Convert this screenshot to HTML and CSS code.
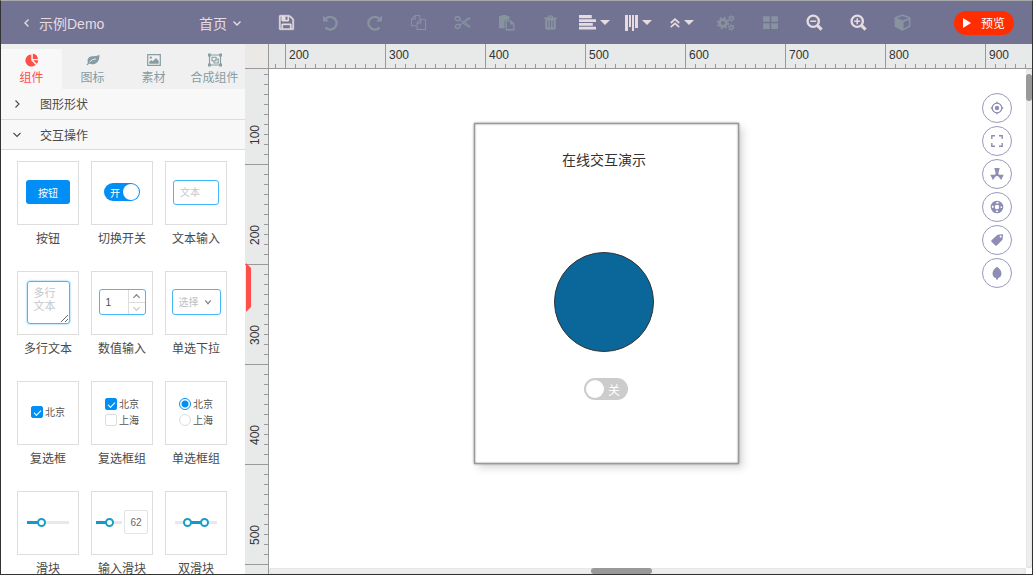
FILE: index.html
```html
<!DOCTYPE html>
<html lang="zh-CN">
<head>
<meta charset="utf-8">
<title>示例Demo</title>
<meta name="viewport" content="width=device-width, initial-scale=1">
<link rel="stylesheet" href="styles.css">
</head>
<body>
<div class="app">
  <header class="topbar">
    <div class="topbar-left">
      <button class="back" type="button"><svg class="chev" viewBox="0 0 10 10"><path d="M6.500 1.500L3 5l3.500 3.500"/></svg>示例Demo</button>
      <button class="page-menu" type="button">首页<svg class="chev" viewBox="0 0 10 10"><path d="M1.500 3.500L5 7l3.500-3.500"/></svg></button>
    </div>
    <nav class="tools" aria-label="工具栏">
      <button class="tool" type="button" aria-label="保存"><svg class="ico" viewBox="0 0 1792 1792"><path stroke="currentColor" stroke-width="50" d="M512 1536h768v-384h-768v384zm896 0h128v-896q0-14-10-38.500t-20-34.500l-281-281q-10-10-34-20t-39-10v416q0 40-28 68t-68 28h-576q-40 0-68-28t-28-68v-416h-128v1280h128v-416q0-40 28-68t68-28h832q40 0 68 28t28 68v416zm-384-928v-320q0-13-9.500-22.500t-22.500-9.500h-192q-13 0-22.500 9.500t-9.500 22.500v320q0 13 9.500 22.500t22.500 9.500h192q13 0 22.500-9.500t9.500-22.500zm640 32v928q0 40-28 68t-68 28h-1344q-40 0-68-28t-28-68v-1344q0-40 28-68t68-28h928q40 0 88 20t76 48l280 280q28 28 48 76t20 88z"/></svg></button>
      <button class="tool off" type="button" aria-label="撤销"><svg class="ico" viewBox="0 0 16 16"><path d="M3.200 12.600A6 6 0 1 0 3.600 4.300" fill="none" stroke="currentColor" stroke-width="2.200"/><path d="M1 1.500v5.500h5.500z"/></svg></button>
      <button class="tool off" type="button" aria-label="重做"><svg class="ico" viewBox="0 0 16 16"><path d="M12.800 12.600A6 6 0 1 1 12.400 4.300" fill="none" stroke="currentColor" stroke-width="2.200"/><path d="M15 1.500v5.500H9.500z"/></svg></button>
      <button class="tool off" type="button" aria-label="复制"><svg class="ico line" viewBox="0 0 18 18"><path d="M6.500 12.500h-5v-7l4-4h5v4M5.500 1.500v4h-4M7.500 9.500l4-4h5v11h-9zM11.500 5.500v4h-4"/></svg></button>
      <button class="tool off" type="button" aria-label="剪切"><svg class="ico line" viewBox="0 0 18 18"><g stroke-width="1.500"><ellipse cx="4" cy="5" rx="2.700" ry="2" transform="rotate(25 4 5)"/><ellipse cx="4" cy="13" rx="2.700" ry="2" transform="rotate(-25 4 13)"/></g><path d="M6.300 6.500L9 8.300 16 4l1 1-9.600 6-1 .6M9 9.500l7 4.500 1-1-5.500-4"/></svg></button>
      <button class="tool off" type="button" aria-label="粘贴"><svg class="ico" viewBox="0 0 18 18"><path d="M1 2h3V1h5v1h3v4H8.500L7 7.500V15H1z"/><path d="M8.700 7.200h4.600l3.500 3.500v6h-8.100z" fill="none" stroke="currentColor" stroke-width="1.400"/><path d="M13 7v4h4z"/></svg></button>
      <button class="tool off" type="button" aria-label="删除"><svg class="ico" viewBox="0 0 16 16"><path fill-rule="evenodd" d="M2 3.200h3.300L6 1.500h4l.7 1.700H14v1.300h-1V13q0 1.800-1.500 1.800h-7Q3 14.800 3 13V4.500H2zM6.700 3.200h2.600L9 2.500H7zM5 6v6.500h1V6zm2.500 0v6.500h1V6zM10 6v6.500h1V6z"/></svg></button>
      <button class="tool" type="button" aria-label="水平对齐"><svg class="ico" viewBox="0 0 16 16"><path d="M0 1h12v3H0zM0 5h16v2.500H0zM0 8.500h13v2.500H0zM0 12h16v2.500H0z"/></svg><i class="caret"></i></button>
      <button class="tool" type="button" aria-label="垂直对齐"><svg class="ico narrow" viewBox="0 0 13 16"><path d="M0 0h3v16H0zM4 0h2v12H4zM7 0h2v16H7zM10 0h3v13h-3z"/></svg><i class="caret"></i></button>
      <button class="tool" type="button" aria-label="层级"><svg class="ico tiny" viewBox="0 0 10 10"><path d="M.8 5L5 1.200 9.200 5M.8 9.200L5 5.400l4.200 3.800" fill="none" stroke="currentColor" stroke-width="1.700"/></svg><i class="caret"></i></button>
      <button class="tool off" type="button" aria-label="设置"><svg class="ico wide" viewBox="0 0 18 16"><g fill="none" stroke="currentColor"><circle cx="6" cy="8" r="3.400" stroke-width="2.600"/><circle cx="6" cy="8" r="5.300" stroke-width="1.800" stroke-dasharray="2.080"/><circle cx="14.300" cy="3.500" r="1.700" stroke-width="1.400"/><circle cx="14.300" cy="3.500" r="2.800" stroke-width="1.100" stroke-dasharray="1.470"/><circle cx="14.300" cy="12.500" r="1.700" stroke-width="1.400"/><circle cx="14.300" cy="12.500" r="2.800" stroke-width="1.100" stroke-dasharray="1.470"/></g></svg></button>
      <button class="tool off" type="button" aria-label="组合"><svg class="ico" viewBox="0 0 16 16"><path d="M1 2h6.300v5.300H1zM8.700 2H15v5.300H8.700zM1 8.700h6.300V14H1zM8.700 8.700H15V14H8.700z"/></svg></button>
      <button class="tool" type="button" aria-label="缩小"><svg class="ico" viewBox="0 0 16 16"><g fill="none" stroke="currentColor"><circle cx="6.800" cy="6.800" r="5.300" stroke-width="2.200"/><path d="M10.700 10.700l4 4" stroke-width="2.900"/><path d="M4 6.800h5.600" stroke-width="1.400"/></g></svg></button>
      <button class="tool" type="button" aria-label="放大"><svg class="ico" viewBox="0 0 16 16"><g fill="none" stroke="currentColor"><circle cx="6.800" cy="6.800" r="5.300" stroke-width="2.200"/><path d="M10.700 10.700l4 4" stroke-width="2.900"/><path d="M4 6.800h5.600M6.800 4v5.600" stroke-width="1.400"/></g></svg></button>
      <button class="tool off" type="button" aria-label="三维"><svg class="ico" viewBox="0 0 16 16"><path fill-rule="evenodd" d="M8 .3l7.500 2.800v9L8 15.900.5 12.100v-9zM8 1.900L2.600 3.900 8 5.900l5.400-2zM9 7.600v6l5-2.500V5.700z"/></svg></button>
    </nav>
    <button class="preview" type="button"><svg viewBox="0 0 8 10"><path d="M0 0l8 5-8 5z"/></svg>预览</button>
  </header>

  <aside class="sidebar">
    <div class="tabs" role="tablist">
      <button class="tab active" role="tab" aria-selected="true" type="button"><svg viewBox="0 0 14 14"><path d="M6.300 1.500v6l4.300 4.300A6 6 0 1 1 6.300 1.500z"/><path d="M7.800.8A6 6 0 0 1 13 6L7.800 6zM8.200 7.300H13.300a6 6 0 0 1-1.700 3.500z"/></svg>组件</button>
      <button class="tab" role="tab" aria-selected="false" type="button"><svg viewBox="0 0 14 14"><path d="M13.300 1.500c.6 4-1 9-5.800 9.700-2 .3-3.300-.6-4.300-.5-.8.100-1.200 1.500-1.800 1.500-.7 0-1-.8-.5-1.300l1-1C.6 4.700 3.500 3.200 7.500 3.200c3 0 4.800-.4 5.800-1.700z"/><path d="M3.600 9.200C5.500 7 7.500 6 10 6" fill="none" stroke="#f0f0f0" stroke-width=".9"/></svg>图标</button>
      <button class="tab" role="tab" aria-selected="false" type="button"><svg viewBox="0 0 14 14"><path d="M.7 1.700h12.600v10.600H.7z" fill="none" stroke="currentColor" stroke-width="1.200"/><circle cx="3.800" cy="4.600" r="1.200"/><path d="M2.300 10.700V8.800L4.500 7l1.300 1.200L9 5l2.700 3v2.700z"/></svg>素材</button>
      <button class="tab" role="tab" aria-selected="false" type="button"><svg viewBox="0 0 14 14"><g fill="none" stroke="currentColor" stroke-width="1.100"><path d="M1.500 2h11v10h-11zM4 4.300h4v3.500H4zM8 6h2.300v4H6V7.800"/></g><path d="M0 .6h2.800v2.800H0zM11.200.6H14v2.800h-2.800zM0 10.600h2.800v2.800H0zM11.200 10.600H14v2.800h-2.800z"/></svg>合成组件</button>
    </div>
    <button class="section" type="button" aria-expanded="false"><svg class="chev" viewBox="0 0 10 10"><path d="M3.500 1.500L7 5 3.500 8.500"/></svg>图形形状</button>
    <button class="section" type="button" aria-expanded="true"><svg class="chev" viewBox="0 0 10 10"><path d="M1.500 4L5 7.500 8.500 4"/></svg>交互操作</button>

    <div class="widgets">
      <figure class="widget"><div class="box"><button class="mini-btn" type="button">按钮</button></div><figcaption>按钮</figcaption></figure>
      <figure class="widget"><div class="box"><button class="switch on" type="button" role="switch" aria-checked="true">开<i class="knob"></i></button></div><figcaption>切换开关</figcaption></figure>
      <figure class="widget"><div class="box"><input class="mini-text" type="text" placeholder="文本" aria-label="文本输入"></div><figcaption>文本输入</figcaption></figure>

      <figure class="widget"><div class="box"><textarea class="mini-area" placeholder="多行
文本" aria-label="多行文本"></textarea></div><figcaption>多行文本</figcaption></figure>
      <figure class="widget"><div class="box"><div class="mini-num"><input type="text" value="1" aria-label="数值输入"><div class="steps"><button type="button" aria-label="增加"><svg class="chev" viewBox="0 0 10 10"><path d="M1.500 6.500L5 3l3.500 3.500"/></svg></button><button class="down" type="button" aria-label="减少"><svg class="chev" viewBox="0 0 10 10"><path d="M1.500 3.500L5 7l3.500-3.500"/></svg></button></div></div></div><figcaption>数值输入</figcaption></figure>
      <figure class="widget"><div class="box"><div class="mini-select"><select aria-label="单选下拉"><option>选择</option></select><svg class="chev" viewBox="0 0 10 10"><path d="M1.500 3L5 7l3.500-4"/></svg></div></div><figcaption>单选下拉</figcaption></figure>

      <figure class="widget"><div class="box"><div class="choices"><label><input type="checkbox" checked>北京</label></div></div><figcaption>复选框</figcaption></figure>
      <figure class="widget"><div class="box"><div class="choices"><label><input type="checkbox" checked>北京</label><label><input type="checkbox">上海</label></div></div><figcaption>复选框组</figcaption></figure>
      <figure class="widget"><div class="box"><div class="choices"><label><input type="radio" name="city" checked>北京</label><label><input type="radio" name="city">上海</label></div></div><figcaption>单选框组</figcaption></figure>

      <figure class="widget"><div class="box"><input class="range single" type="range" value="29" aria-label="滑块"></div><figcaption>滑块</figcaption></figure>
      <figure class="widget"><div class="box"><input class="range short" type="range" value="50" aria-label="输入滑块"><input class="range-value" type="text" value="62" aria-label="滑块数值"></div><figcaption>输入滑块</figcaption></figure>
      <figure class="widget"><div class="box"><input class="range low" type="range" value="70" aria-label="最小值"><input class="range high" type="range" value="30" aria-label="最大值"></div><figcaption>双滑块</figcaption></figure>
    </div>
  </aside>

  <main class="workspace">
    <div class="corner"></div>
    <div class="ruler-x"><span>200</span><span>300</span><span>400</span><span>500</span><span>600</span><span>700</span><span>800</span><span>900</span></div>
    <div class="ruler-y"><span>100</span><span>200</span><span>300</span><span>400</span><span>500</span></div>
    <div class="canvas">
      <div class="sheet">
        <div class="sheet-title">在线交互演示</div>
        <div class="circle"></div>
        <button class="switch sheet-switch" type="button" role="switch" aria-checked="false"><i class="knob"></i>关</button>
      </div>
      <div class="side-tools">
        <button type="button" aria-label="定位"><svg viewBox="0 0 14 14"><g fill="none" stroke="currentColor" stroke-width="1.300"><circle cx="7" cy="7" r="4.800"/><path d="M7 .8v2M7 11.200v2M.8 7h2M11.200 7h2"/></g><circle cx="7" cy="7" r="2.200"/></svg></button>
        <button type="button" aria-label="全屏"><svg viewBox="0 0 14 14"><path d="M1.800 5V1.800H5M9 1.800h3.200V5M12.200 9v3.200H9M5 12.200H1.800V9" fill="none" stroke="currentColor" stroke-width="1.400"/></svg></button>
        <button type="button" aria-label="节点"><svg viewBox="0 0 14 14"><path d="M4.300 1h5.400L8.500 5.500v1.700l1 .6h4.200l-2.500 5.200L8.500 9.600 7 8.900l-1.500.7L2.800 13 .3 7.800h4.200l1-.6V5.500z"/></svg></button>
        <button type="button" aria-label="帮助"><svg viewBox="0 0 14 14"><g fill="none" stroke="currentColor"><circle cx="7" cy="7" r="5.700" stroke-width="1.200"/><circle cx="7" cy="7" r="4.200" stroke-width="3" stroke-dasharray="4.400 2.200" stroke-dashoffset="-1"/><circle cx="7" cy="7" r="2.800" stroke-width="1.200"/></g></svg></button>
        <button type="button" aria-label="标签"><svg viewBox="0 0 14 14"><path fill-rule="evenodd" d="M7.500 1.800L12.300 1.200q.8 0 .8.800l-.6 4.800-5.700 5.600q-.8.600-1.500 0L1.500 8.700q-.7-.8 0-1.500zM10.700 2.600a1 1 0 1 0 .01 0z"/></svg></button>
        <button type="button" aria-label="主题"><svg viewBox="0 0 14 14"><path d="M7 .8c2 1.400 4.500 3.500 4.500 6.700 0 2.200-1.200 4-3.500 4.500v1.400H6V12C3.700 11.500 2.500 9.700 2.500 7.500 2.500 4.300 5 2.200 7 .8z"/></svg></button>
      </div>
      <div class="scroll-y"><i></i></div>
      <div class="scroll-x"><i></i></div>
    </div>
    <button class="collapse" type="button" aria-label="收起"></button>
  </main>
</div>
</body>
</html>
```
FILE: styles.css
```css
* { box-sizing: border-box; }

body {
  margin: 0;
  font-family: "Liberation Sans", "Noto Sans CJK SC", sans-serif;
  font-size: 12px;
  color: #4a4a4a;
}

button, input, textarea, select {
  font: inherit;
  color: inherit;
  margin: 0;
  padding: 0;
  border: 0;
  background: none;
}

button { cursor: pointer; }

svg { display: block; flex: none; fill: currentColor; }

.chev {
  width: 10px;
  height: 10px;
  fill: none;
  stroke: currentColor;
  stroke-width: 1.4;
}

.app {
  height: 100vh;
  display: grid;
  grid-template: 43px minmax(0, 1fr) / 244px minmax(0, 1fr);
  border: 1px solid #333;
  border-top-color: #aaa;
  overflow: hidden;
}

/* Top bar */
.topbar {
  grid-column: 1 / -1;
  display: flex;
  align-items: center;
  background: #727293;
  color: #e6dce0;
}

.topbar-left {
  flex: none;
  width: 263px;
  display: flex;
  justify-content: space-between;
  padding: 0 22px 0 21px;
  font-size: 14px;
}

.back, .page-menu { display: flex; align-items: center; gap: 7px; }
.page-menu { gap: 5px; }

.tools { display: flex; }

.tool {
  width: 44px;
  height: 43px;
  display: flex;
  align-items: center;
  justify-content: center;
  gap: 4px;
}

.tool.off { color: #87939f; }

.ico { width: 17px; height: 17px; }
.ico.line { fill: none; stroke: currentColor; stroke-width: 1.1; }
.ico.narrow { width: 13px; height: 16px; }
.ico.tiny { width: 10px; height: 10px; }
.ico.wide { width: 18px; height: 16px; }

.caret {
  border: 5px solid transparent;
  border-top-color: currentColor;
  border-bottom: 0;
}

.preview {
  margin-left: auto;
  margin-right: 18px;
  width: 60px;
  height: 24px;
  display: flex;
  align-items: center;
  justify-content: center;
  gap: 10px;
  border-radius: 12px;
  background: #ff2d00;
  color: #fff;
}

.preview svg { width: 8px; height: 10px; }

/* Sidebar */
.sidebar {
  display: flex;
  flex-direction: column;
  background: #fff;
  overflow: hidden;
}

.tabs {
  flex: none;
  display: grid;
  grid-template-columns: repeat(4, 1fr);
  padding-top: 5px;
  background: #f0f0f0;
}

.tab {
  height: 40px;
  display: flex;
  flex-direction: column;
  align-items: center;
  gap: 1px;
  padding-top: 4px;
  line-height: 20px;
  white-space: nowrap;
  color: #879da4;
}

.tab.active { background: #f8f8f8; color: #ff4f48; }
.tab svg { width: 14px; height: 14px; }

.section {
  flex: none;
  height: 31px;
  display: flex;
  align-items: center;
  gap: 18px;
  padding: 0 0 1px 11px;
  border-bottom: 1px solid #dcdcdc;
  background: #f8f8f8;
}

.section .chev { stroke-width: 1.1; }
.section:nth-of-type(2) { height: 30px; }

.widgets {
  display: grid;
  grid-template-columns: repeat(3, 62px);
  justify-content: center;
  gap: 18px 12px;
  padding: 11px 2px 0 0;
}

.widget { margin: 0; text-align: center; }
.widget figcaption { line-height: 28px; margin: 0 -6px; }

.box {
  height: 64px;
  display: flex;
  align-items: center;
  justify-content: center;
  padding-bottom: 2px;
  border: 1px solid #ddd;
  font-size: 10px;
}

.mini-btn {
  width: 44px;
  height: 24px;
  border-radius: 3px;
  background: #028ff5;
  color: #fff;
}

.switch {
  display: flex;
  align-items: center;
  justify-content: space-between;
  border-radius: 12px;
  color: #fff;
}

.switch.on {
  width: 36px;
  height: 18px;
  padding: 0 1px 0 6px;
  background: #028ff5;
}

.knob {
  width: 16px;
  height: 16px;
  border-radius: 50%;
  background: #fff;
}

.mini-text, .mini-area, .mini-num, .mini-select {
  border: 1px solid #45b8f8;
  border-radius: 3px;
}

.mini-text { width: 46px; height: 25px; padding: 0 6px; }
.mini-area {
  width: 43px;
  height: 43px;
  padding: 5px 6px;
  font-size: 11px;
  line-height: 13px;
  box-shadow: 0 0 2px #45b8f8;
}

::placeholder { color: #c4c8ce; opacity: 1; }

.mini-num { display: flex; width: 47px; height: 26px; }
.mini-num > input { width: 28px; min-width: 0; padding-left: 6px; }

.steps {
  flex: 1;
  display: grid;
  grid-template-rows: 1fr 1fr;
  border-left: 1px solid #ddd;
}

.steps button { display: flex; align-items: center; justify-content: center; color: #888; }
.steps .down { border-top: 1px solid #ddd; color: #ccc; }
.steps .chev { width: 9px; height: 9px; }

.mini-select {
  width: 49px;
  height: 26px;
  display: flex;
  align-items: center;
  padding: 0 8px 0 6px;
  color: #8a8a8a;
}

.mini-select select { appearance: none; flex: 1; min-width: 0; color: #bbc0c6; }
.mini-select .chev { width: 8px; height: 8px; stroke-width: 1.8; }

.choices { display: grid; gap: 1px; color: #555; }
.choices label { display: flex; align-items: center; gap: 2px; line-height: 15px; }

.choices input {
  appearance: none;
  width: 12px;
  height: 12px;
  border: 1px solid #ddd;
  border-radius: 2px;
}

.choices input[type="radio"] { border-radius: 50%; }

.choices input[type="checkbox"]:checked {
  border-color: #028ff5;
  background: #028ff5;
  display: grid;
  place-items: center;
}

.choices input[type="checkbox"]:checked::before {
  content: "";
  width: 6px;
  height: 3px;
  border: solid #fff;
  border-width: 0 0 1px 1px;
  transform: rotate(-45deg);
}

.choices input[type="radio"]:checked {
  border-color: #028ff5;
  background: radial-gradient(circle, #028ff5 3px, #fff 4px);
}

.range {
  --from: #0f9bd0;
  --to: #e8e8e8;
  appearance: none;
  height: 9px;
  background: linear-gradient(90deg, var(--from) var(--fill), var(--to) 0) center / 100% 3px no-repeat;
}

.range::-webkit-slider-thumb {
  appearance: none;
  width: 9px;
  height: 9px;
  border: 2px solid #1a9dc8;
  border-radius: 50%;
  background: #fff;
}

.range.single { width: 42px; --fill: 33%; }
.range.short { width: 26px; --fill: 50%; }
.range.low, .range.high { width: 21px; }
.range.low { --from: #e8e8e8; --to: #0f9bd0; --fill: 60%; }
.range.high { --fill: 40%; }

.range-value {
  width: 24px;
  height: 24px;
  margin-left: 2px;
  border: 1px solid #e4e4e4;
  border-radius: 2px;
  text-align: center;
  color: #666;
}

/* Workspace */
.workspace {
  position: relative;
  display: grid;
  grid-template: 25px minmax(0, 1fr) / 24px minmax(0, 1fr);
  background: #e8eae9;
  color: #333;
}

.corner {
  border: solid #999;
  border-width: 0 1px 1px 0;
  background: #ebe9e6;
}

.ruler-x {
  display: flex;
  padding-left: 16px;
  overflow: hidden;
  border-bottom: 1px solid #999;
  background: linear-gradient(90deg, #999 1px, transparent 0) 6px 100% / 10px 4px repeat-x;
}

.ruler-x span {
  flex: 0 0 100px;
  padding-left: 3px;
  border-left: 1px solid #999;
  line-height: 23px;
}

.ruler-y {
  overflow: hidden;
  border-right: 1px solid #999;
  background: linear-gradient(#999 1px, transparent 0) 100% 5px / 4px 10px repeat-y;
}

.ruler-y span {
  display: block;
  height: 100px;
  padding-top: 19px;
  border-top: 1px solid #999;
  line-height: 17px;
  writing-mode: vertical-rl;
  transform: rotate(180deg);
  width: 23px;
  padding-right: 2px;
}

.ruler-y span:first-child { height: 96px; }

.canvas { position: relative; background: #fff; overflow: hidden; }

.sheet {
  position: absolute;
  left: 205px;
  top: 54px;
  width: 265px;
  height: 341px;
  border: 1px solid #999;
  background: #fff;
  box-shadow: 0 0 2px #777, inset 0 0 2px #777, 4px 4px 8px rgba(0, 0, 0, .15);
}

.sheet-title {
  position: absolute;
  left: 87px;
  top: 26px;
  font-size: 14px;
  line-height: 20px;
  white-space: nowrap;
}

.circle {
  position: absolute;
  left: 79px;
  top: 128px;
  width: 100px;
  height: 100px;
  border: 1px solid #333;
  border-radius: 50%;
  background: #0b6799;
}

.sheet-switch {
  position: absolute;
  left: 109px;
  top: 254px;
  width: 44px;
  height: 22px;
  padding: 0 8px 0 2px;
  background: #ccc;
}

.sheet-switch .knob { width: 18px; height: 18px; }

.side-tools {
  position: absolute;
  right: 20px;
  top: 24px;
  display: grid;
  gap: 3px;
}

.side-tools button {
  width: 30px;
  height: 30px;
  display: grid;
  place-items: center;
  border: 1px solid #9999bb;
  border-radius: 50%;
  color: #8e8eb5;
}

.side-tools svg { width: 14px; height: 14px; }

.scroll-y, .scroll-x {
  position: absolute;
  border-radius: 3px;
  background: #eee;
  box-shadow: inset 0 0 1px #aaa;
}

.scroll-y { top: 0; right: 0; bottom: 6px; width: 6px; }
.scroll-x { left: 0; right: 6px; bottom: 0; height: 6px; }
.scroll-y i, .scroll-x i { position: absolute; border-radius: 3px; background: #999; }
.scroll-y i { top: 5px; width: 6px; height: 27px; }
.scroll-x i { left: 322px; width: 61px; height: 6px; }

.collapse {
  position: absolute;
  left: 1px;
  top: 219px;
  width: 5px;
  height: 49px;
  background: #ff4f48;
  clip-path: polygon(0 0, 100% 5px, 100% 44px, 0 100%);
}
```
